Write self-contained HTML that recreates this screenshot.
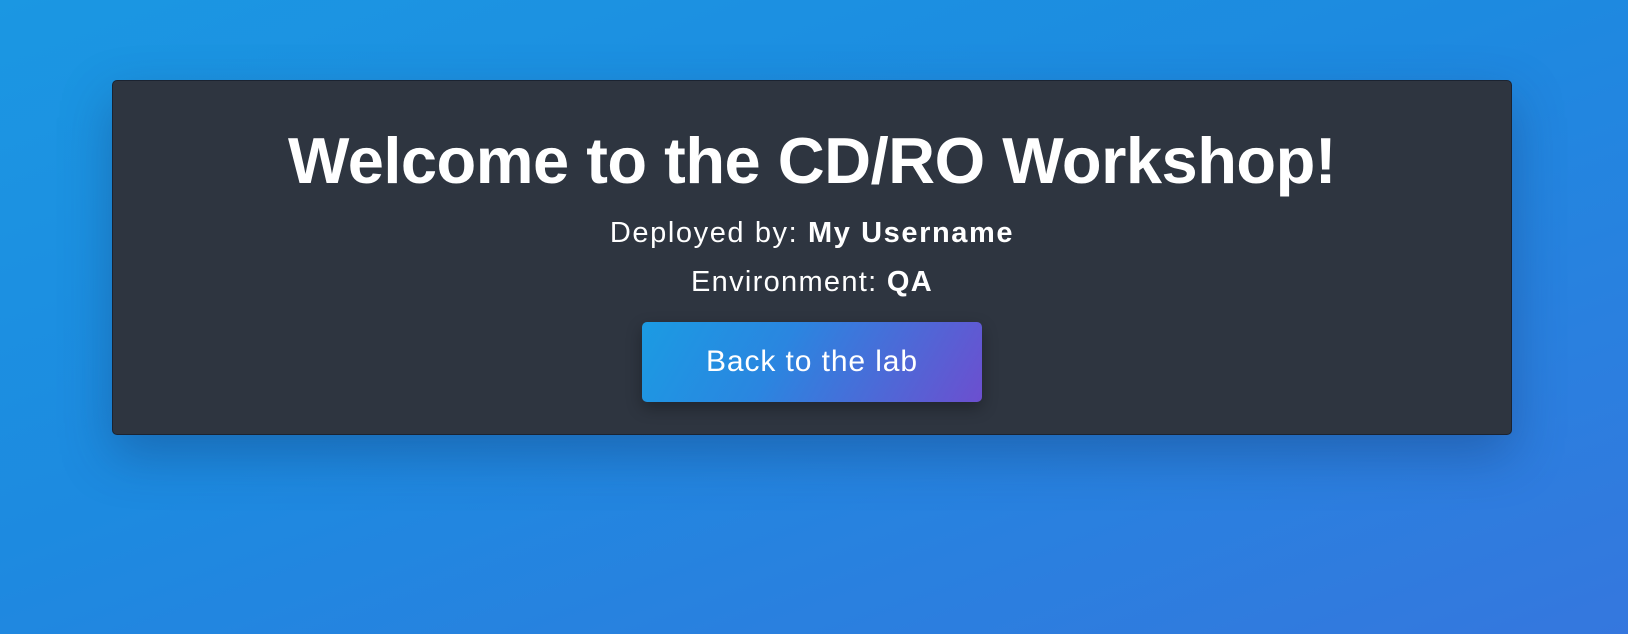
<!DOCTYPE html>
<html><head><meta charset="utf-8"><style>
html,body{margin:0;padding:0;width:1628px;height:634px;overflow:hidden}
body{background:linear-gradient(160deg,#1b97e2 0%,#1d8ae0 45%,#3577de 100%);font-family:"Liberation Sans",Helvetica,Arial,sans-serif;color:#fff;position:relative}
.card{position:absolute;left:112px;top:80px;width:1398px;height:353px;background:#2e3540;border:1px solid #1b2331;border-radius:5px;box-shadow:0 20px 50px rgba(20,50,100,.35)}
.t{position:absolute;left:0;right:0;text-align:center;white-space:nowrap}
h1{margin:0;font-size:65px;font-weight:bold;top:40px;line-height:80px;letter-spacing:-0.5px}
.l1{top:132px;font-size:29px;line-height:40px;letter-spacing:1.6px}
.l2{top:181px;font-size:29px;line-height:40px;letter-spacing:1.3px}
.btn{position:absolute;left:529px;top:241px;width:340px;height:80px;border-radius:5px;background:linear-gradient(120deg,#1b9be3 0%,#2a86e0 40%,#6c4fcf 100%);box-shadow:0 6px 16px rgba(0,0,0,.3);font-size:30px;line-height:80px;text-align:center;letter-spacing:0.9px}
</style></head><body>
<div class="card">
<h1 class="t">Welcome to the CD/RO Workshop!</h1>
<div class="t l1">Deployed by: <b>My Username</b></div>
<div class="t l2">Environment: <b>QA</b></div>
<div class="btn">Back to the lab</div>
</div>
</body></html>
